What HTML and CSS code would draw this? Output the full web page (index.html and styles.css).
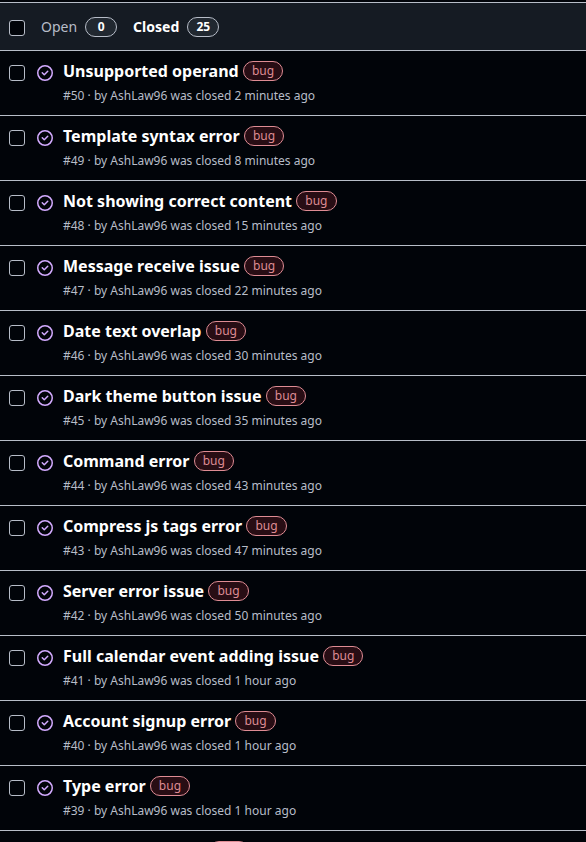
FILE: index.html
```html
<!DOCTYPE html>
<html lang="en">
<head>
<meta charset="utf-8">
<title>Issues</title>
<link rel="stylesheet" href="styles.css">
</head>
<body>
<svg class="defs" width="0" height="0"><symbol id="closed" viewBox="0 0 16 16"><path d="M11.28 6.78a.75.75 0 0 0-1.06-1.06L7.25 8.69 5.78 7.22a.75.75 0 0 0-1.06 1.06l2 2a.75.75 0 0 0 1.06 0l3.5-3.5Z"/><path d="M16 8A8 8 0 1 1 0 8a8 8 0 0 1 16 0Zm-1.5 0a6.5 6.5 0 1 0-13 0 6.5 6.5 0 0 0 13 0Z"/></symbol></svg>
<header class="head">
  <span class="box"></span>
  <span class="tab">Open<span class="count">0</span></span>
  <span class="tab active">Closed<span class="count">25</span></span>
</header>
<main id="list"></main>
<script src="app.js"></script>
</body>
</html>
```
FILE: styles.css
```css
* { box-sizing: border-box; }
html, body { height: 100%; }
body {
  margin: 0;
  padding-top: 2px;
  overflow: hidden;
  background: #010409;
  color: #fff;
  font-family: "Noto Sans", sans-serif;
  display: flex;
  flex-direction: column;
}
.defs { position: absolute; }
main { flex: 1; min-height: 0; overflow: hidden; }
.head {
  flex: none;
  height: 49px;
  display: flex;
  align-items: center;
  padding-left: 9px;
  background: #151b23;
  border-top: 1px solid #b7bdc8;
  border-bottom: 1px solid #b7bdc8;
}
.box {
  flex: none;
  width: 16px;
  height: 16px;
  border: 1px solid #b7bdc8;
  border-radius: 3px;
  background: #010409;
}
.head .box { margin-top: 2px; }
.tab {
  display: flex;
  align-items: center;
  gap: 8px;
  margin-left: 16px;
  font-size: 14px;
  line-height: 20px;
  color: #b7bdc8;
}
.tab.active { color: #fff; font-weight: 700; }
.count {
  min-width: 32px;
  height: 20px;
  padding: 0 8px;
  border: 1px solid #b7bdc8;
  border-radius: 10px;
  background: #212830;
  color: #fff;
  font-size: 12px;
  line-height: 18px;
  font-weight: 700;
  text-align: center;
}
.row {
  height: 65px;
  display: flex;
  align-items: flex-start;
  padding-left: 9px;
  border-bottom: 1px solid #b7bdc8;
}
.row .box { margin-top: 14px; }
.icon {
  flex: none;
  width: 16px;
  height: 16px;
  margin: 14px 10px 0 12px;
  fill: #d3abff;
}
.title {
  display: flex;
  align-items: center;
  gap: 4.3px;
  height: 20px;
  margin-top: 10px;
  font-size: 16px;
  line-height: 20px;
  font-weight: 700;
  white-space: nowrap;
}
.label {
  min-width: 40px;
  height: 20px;
  padding: 0 8px;
  border: 1px solid #df8c94;
  border-radius: 10px;
  background: #280d14;
  color: #df8c94;
  font-size: 12px;
  line-height: 18px;
  font-weight: 400;
}
.meta {
  margin-top: 6px;
  font-size: 12px;
  line-height: 18px;
  color: #b7bdc8;
}
.cut { width: 142px; }
```
FILE: app.js
```js
const issues = [
  ["Unsupported operand", 50, "2 minutes"],
  ["Template syntax error", 49, "8 minutes"],
  ["Not showing correct content", 48, "15 minutes"],
  ["Message receive issue", 47, "22 minutes"],
  ["Date text overlap", 46, "30 minutes"],
  ["Dark theme button issue", 45, "35 minutes"],
  ["Command error", 44, "43 minutes"],
  ["Compress js tags error", 43, "47 minutes"],
  ["Server error issue", 42, "50 minutes"],
  ["Full calendar event adding issue", 41, "1 hour"],
  ["Account signup error", 40, "1 hour"],
  ["Type error", 39, "1 hour"]
];
const row = (title, label, meta) => `<article class="row"><span class="box"></span>
  <svg class="icon"><use href="#closed"/></svg>
  <div><div class="title">${title}<span class="label">${label}</span></div>${meta}</div></article>`;
document.getElementById("list").innerHTML =
  issues.map(([t, n, ago]) => row(`<span>${t}</span>`, "bug",
    `<div class="meta">#${n} · by AshLaw96 was closed ${ago} ago</div>`)).join("") +
  row('<span class="cut"></span>', "", "");
```
